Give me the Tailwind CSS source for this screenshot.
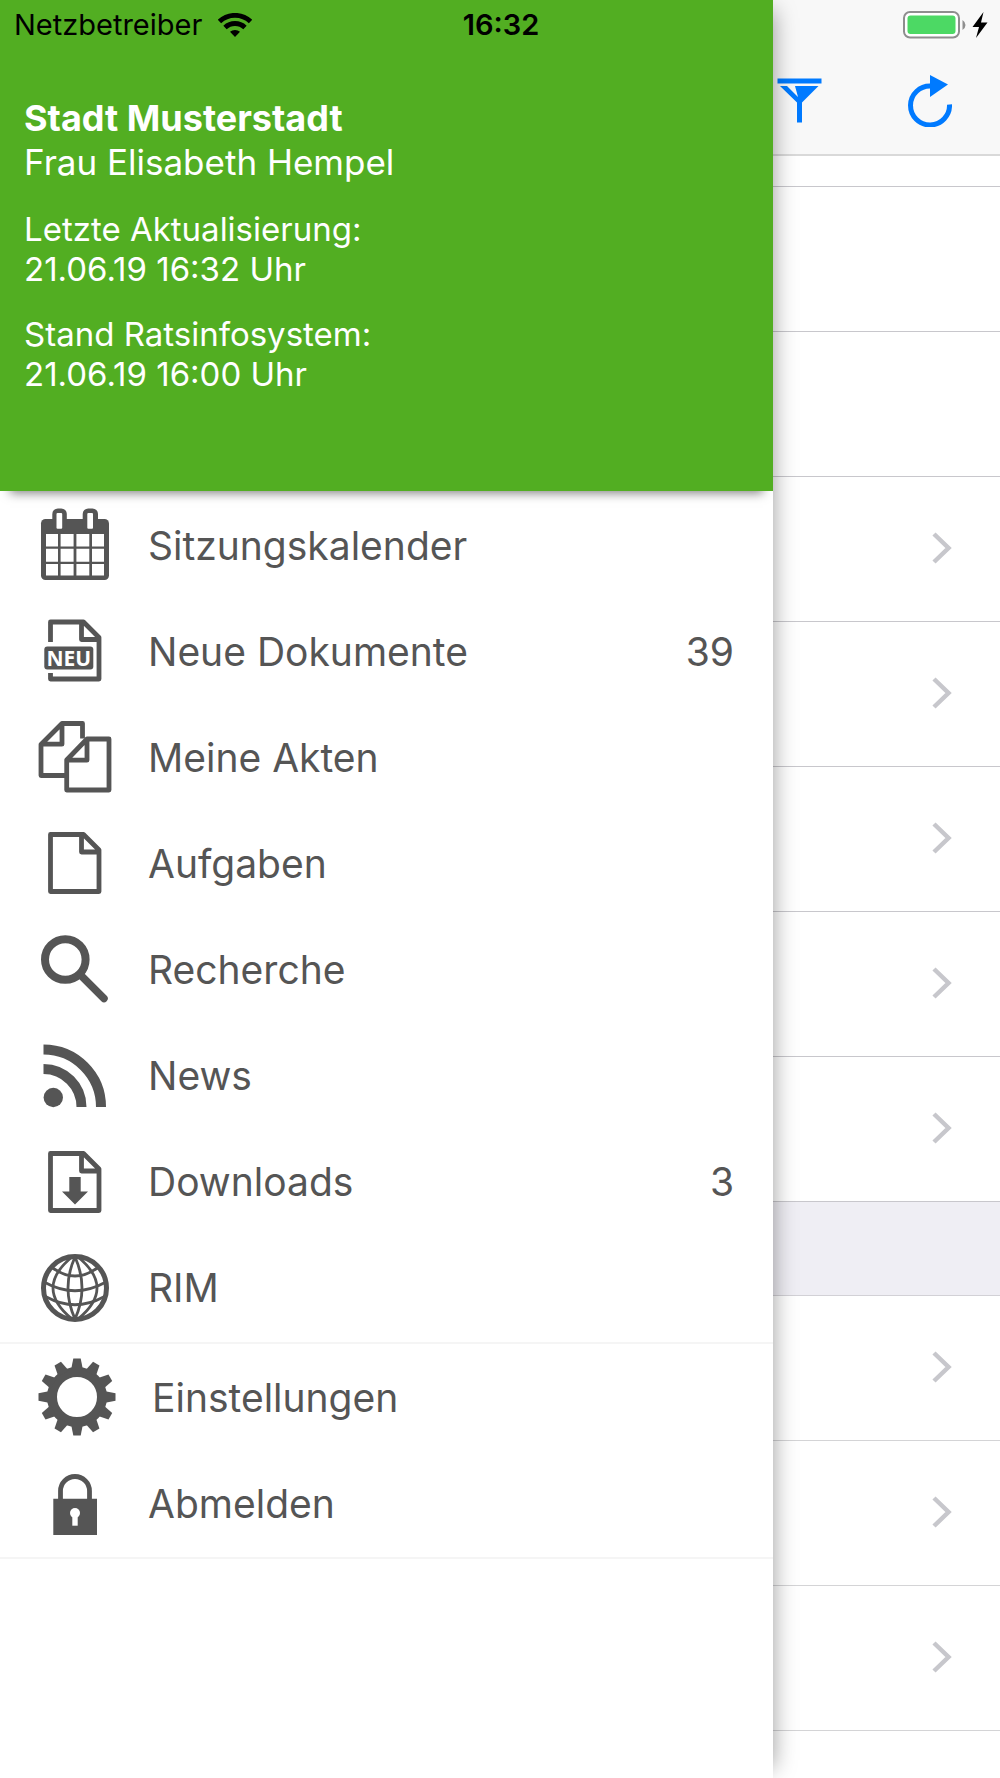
<!DOCTYPE html>
<html lang="de">
<head>
  <meta charset="utf-8">
  <meta name="viewport" content="width=device-width, initial-scale=1">
  <title>Stadt Musterstadt</title>
  <script src="https://cdn.jsdelivr.net/npm/@tailwindcss/browser@4"></script>
</head>
<body class="bg-white font-['Inter',sans-serif]">
<div class="relative flex min-h-screen overflow-hidden">

  <!-- Status bar, lies over drawer and page -->
  <div class="absolute inset-x-0 top-0 z-20 grid h-[50px] grid-cols-3 items-center pl-[14px] pr-3 text-[29px] text-black">
    <div class="flex items-center gap-4">
      <span>Netzbetreiber</span>
      <svg class="h-6 w-[34px]" viewBox="0 0 34 24" fill="none" stroke="#000" aria-label="WLAN">
        <path d="M1.500 8.500a22.500 22.500 0 0 1 31 0" stroke-width="4.800"/>
        <path d="M7 14.500a14.500 14.500 0 0 1 20 0" stroke-width="4.800"/>
        <path d="M17 24l-5-5.200a7.500 7.500 0 0 1 10 0z" fill="#000" stroke="none"/>
      </svg>
    </div>
    <span class="text-center font-semibold">16:32</span>
    <div class="flex items-center justify-end gap-1.5">
      <svg class="h-7 w-16" viewBox="0 0 64 28" aria-label="Batterie">
        <rect x="2" y="1" width="55" height="25.500" rx="6" fill="#fff" stroke="#8e8e8e" stroke-width="2"/>
        <rect x="5.500" y="4.500" width="48" height="18.500" rx="3" fill="#4cd964"/>
        <path d="M60.500 9q3 2 3 5t-3 5z" fill="#8e8e8e"/>
      </svg>
      <svg class="h-[26px] w-4" viewBox="0 0 16 26" aria-label="Lädt">
        <path d="M11.500 0L.5 15h6.500L4 26 15.500 10.500H9z" fill="#000"/>
      </svg>
    </div>
  </div>

  <!-- Drawer -->
  <aside class="relative z-10 w-[77.3%] shrink-0 bg-white shadow-[10px_0_22px_-10px_rgba(0,0,0,0.4)]">
    <header class="relative h-[491px] bg-[#52ae22] pl-6 pt-24 text-white shadow-[0_12px_10px_-10px_rgba(0,0,0,0.5)]">
      <h1 class="text-[36px] leading-[44px] font-bold">Stadt Musterstadt</h1>
      <p class="text-[35px] leading-[44px]">Frau Elisabeth Hempel</p>
      <p class="mt-[25px] text-[33px] leading-[40px]">Letzte Aktualisierung:<br>21.06.19 16:32 Uhr</p>
      <p class="mt-[25px] text-[33px] leading-[40px]">Stand Ratsinfosystem:<br>21.06.19 16:00 Uhr</p>
    </header>

    <nav class="text-[39px] text-[#555]">
      <div class="border-b-2 border-[#f5f5f5] pt-px pb-0.5">
        <a href="#" class="flex h-[106px] items-center gap-[34px] pl-9 pr-[39px]">
          <svg class="size-[78px] shrink-0" viewBox="0 0 78 78" fill="#555">
            <rect x="5" y="13" width="68" height="61" rx="4.500"/>
            <rect x="16.300" y="2.500" width="14.500" height="24" rx="5.500"/>
            <rect x="46.700" y="2.500" width="15.300" height="24" rx="5.500"/>
            <g fill="#fff">
              <rect x="20.500" y="7" width="5.700" height="15.700" rx="1"/>
              <rect x="51.300" y="7" width="5.700" height="15.700" rx="1"/>
              <path d="M10 28h12v12.400H10zM24.600 28h13v12.400h-13zM40.400 28h12.900v12.400H40.400zM56 28h12v12.400H56z"/>
              <path d="M10 42.700h12v13H10zM24.600 42.700h13v13h-13zM40.400 42.700h12.900v13H40.400zM56 42.700h12v13H56z"/>
              <path d="M10 58h12v11.400H10zM24.600 58h13v11.400h-13zM40.400 58h12.900v11.400H40.400zM56 58h12v11.400H56z"/>
            </g>
          </svg>
          <span class="pt-0.5">Sitzungskalender</span>
        </a>
        <a href="#" class="flex h-[106px] items-center gap-[34px] pl-9 pr-[39px]">
          <svg class="size-[78px] shrink-0" viewBox="0 0 78 78" fill="none" stroke="#555" stroke-width="4.800" stroke-linejoin="round">
            <path d="M14.500 30V10h33L63 25.500V67H14.500v-6M45.500 10v17.500H63"/>
            <rect x="8.300" y="34.500" width="49" height="23" rx="3" fill="#555" stroke="none"/>
            <text x="32.800" y="53.500" text-anchor="middle" fill="#fff" stroke="none" class="font-['Open_Sans',sans-serif] text-[21px] font-bold">NEU</text>
          </svg>
          <span class="pt-0.5">Neue Dokumente</span>
          <span class="ml-auto pt-0.5">39</span>
        </a>
        <a href="#" class="flex h-[106px] items-center gap-[34px] pl-9 pr-[39px]">
          <svg class="size-[78px] shrink-0" viewBox="0 0 78 78" fill="none" stroke="#555" stroke-width="4.800" stroke-linejoin="round">
            <path d="M29 57.500H5v-31L26 5.500h20.500v15M26 5.500v20.700H5"/>
            <path d="M51 21h22v51H30.700V42zM51 21v21.200H30.700"/>
          </svg>
          <span class="pt-0.5">Meine Akten</span>
        </a>
        <a href="#" class="flex h-[106px] items-center gap-[34px] pl-9 pr-[39px]">
          <svg class="size-[78px] shrink-0" viewBox="0 0 78 78" fill="none" stroke="#555" stroke-width="4.800" stroke-linejoin="round">
            <path d="M14.500 10.500h33L63 26v41.500H14.500zM45.500 10.500V28H63"/>
          </svg>
          <span class="pt-0.5">Aufgaben</span>
        </a>
        <a href="#" class="flex h-[106px] items-center gap-[34px] pl-9 pr-[39px]">
          <svg class="size-[78px] shrink-0" viewBox="0 0 78 78" fill="none" stroke="#555" stroke-linecap="round">
            <circle cx="29.300" cy="29.500" r="20.300" stroke-width="8"/>
            <path d="M45 45.500l23 23" stroke-width="7.500"/>
          </svg>
          <span class="pt-0.5">Recherche</span>
        </a>
        <a href="#" class="flex h-[106px] items-center gap-[34px] pl-9 pr-[39px]">
          <svg class="size-[78px] shrink-0" viewBox="0 0 78 78" fill="none" stroke="#555" stroke-width="10">
            <circle cx="17.300" cy="61.500" r="9.700" fill="#555" stroke="none"/>
            <path d="M7.500 13.500A57.500 57.500 0 0 1 65 71M7.500 33a38 38 0 0 1 38 38"/>
          </svg>
          <span class="pt-0.5">News</span>
        </a>
        <a href="#" class="flex h-[106px] items-center gap-[34px] pl-9 pr-[39px]">
          <svg class="size-[78px] shrink-0" viewBox="0 0 78 78" fill="none" stroke="#555" stroke-width="4.800" stroke-linejoin="round">
            <path d="M14.500 11.500h33L63 27v41.500H14.500zM45.500 11.500V29H63"/>
            <path d="M33.300 35h11.400v14.500H52L39 62.500l-13-13h7.300z" fill="#555" stroke="none"/>
          </svg>
          <span class="pt-0.5">Downloads</span>
          <span class="ml-auto pt-0.5">3</span>
        </a>
        <a href="#" class="flex h-[106px] items-center gap-[34px] pl-9 pr-[39px]">
          <svg class="size-[78px] shrink-0" viewBox="0 0 78 78" fill="none" stroke="#555" stroke-width="2.800">
            <circle cx="39" cy="40" r="31.500" stroke-width="5"/>
            <path d="M39 9Q25 40 39 71M39 9q14 31 0 62M36 9Q-2 40 36 71M42 9q38 31 0 62"/>
            <path d="M16 19.500q23 17 46 0M9 34.500q30 16.500 60 0M10.500 49q28.500 15.500 57 0"/>
          </svg>
          <span class="pt-0.5">RIM</span>
        </a>
      </div>

      <div class="border-b-2 border-[#f5f5f5] pb-px">
        <a href="#" class="flex h-[106px] items-center gap-[34px] pl-9 pr-[39px]">
          <svg class="size-[82px] shrink-0" viewBox="0 0 82 82" fill="#555">
            <defs><path id="tooth" d="M37.300 2.500h7.400L47 14H35z"/></defs>
            <circle cx="41" cy="41" r="25" fill="none" stroke="#555" stroke-width="10"/>
            <use href="#tooth"/>
            <use href="#tooth" transform="rotate(30 41 41)"/>
            <use href="#tooth" transform="rotate(60 41 41)"/>
            <use href="#tooth" transform="rotate(90 41 41)"/>
            <use href="#tooth" transform="rotate(120 41 41)"/>
            <use href="#tooth" transform="rotate(150 41 41)"/>
            <use href="#tooth" transform="rotate(180 41 41)"/>
            <use href="#tooth" transform="rotate(210 41 41)"/>
            <use href="#tooth" transform="rotate(240 41 41)"/>
            <use href="#tooth" transform="rotate(270 41 41)"/>
            <use href="#tooth" transform="rotate(300 41 41)"/>
            <use href="#tooth" transform="rotate(330 41 41)"/>
          </svg>
          <span class="pt-0.5">Einstellungen</span>
        </a>
        <a href="#" class="flex h-[106px] items-center gap-[34px] pl-9 pr-[39px]">
          <svg class="size-[78px] shrink-0" viewBox="0 0 78 78" fill="#555">
            <path d="M24.500 36v-9a14.500 14.500 0 0 1 29 0v9" fill="none" stroke="#555" stroke-width="4.800"/>
            <path d="M17.300 34.700H61V71H17.300z"/>
            <circle cx="39" cy="49" r="5" fill="#fff"/>
            <path d="M36.300 50h5.400v11.700h-5.400z" fill="#fff"/>
          </svg>
          <span class="pt-0.5">Abmelden</span>
        </a>
      </div>
    </nav>
  </aside>

  <!-- Page behind the drawer -->
  <main class="min-w-0 flex-1">
    <div class="flex h-[156px] items-end justify-between border-b-2 border-[#d9d9d9] bg-[#f8f8f8] pb-[27px] pl-1 pr-12">
      <button type="button" aria-label="Filter">
        <svg class="h-[52px] w-[46px]" viewBox="0 0 46 52" fill="#007aff">
          <path d="M.5 3.500h44v5H.5zM3 11h7l11 11-3-11H41.500L25 27.500v20h-5v-20z"/>
        </svg>
      </button>
      <button type="button" aria-label="Aktualisieren">
        <svg class="h-[52px] w-11" viewBox="0 0 44 52" fill="none">
          <path d="M41.500 29.500A19.500 19.500 0 1 1 23 11" stroke="#007aff" stroke-width="5"/>
          <path d="M22 0l18 9.500L22 22z" fill="#007aff"/>
        </svg>
      </button>
    </div>
    <div class="h-[31px] border-b border-[#c8c7cc]"></div>
    <ul class="text-[#c7c7cc]">
      <li class="h-[145px] border-b border-[#c8c7cc]"></li>
      <li class="h-[145px] border-b border-[#c8c7cc]"></li>
      <li class="border-b border-[#c8c7cc]"><a href="#" aria-label="Öffnen" class="flex h-36 items-center justify-end pr-12 pb-0.5"><svg class="h-8 w-5" viewBox="0 0 20 32" fill="none" stroke="currentColor" stroke-width="4.500"><path d="M2 2l14.500 14L2 30"/></svg></a></li>
      <li class="border-b border-[#c8c7cc]"><a href="#" aria-label="Öffnen" class="flex h-36 items-center justify-end pr-12 pb-0.5"><svg class="h-8 w-5" viewBox="0 0 20 32" fill="none" stroke="currentColor" stroke-width="4.500"><path d="M2 2l14.500 14L2 30"/></svg></a></li>
      <li class="border-b border-[#c8c7cc]"><a href="#" aria-label="Öffnen" class="flex h-36 items-center justify-end pr-12 pb-0.5"><svg class="h-8 w-5" viewBox="0 0 20 32" fill="none" stroke="currentColor" stroke-width="4.500"><path d="M2 2l14.500 14L2 30"/></svg></a></li>
      <li class="border-b border-[#c8c7cc]"><a href="#" aria-label="Öffnen" class="flex h-36 items-center justify-end pr-12 pb-0.5"><svg class="h-8 w-5" viewBox="0 0 20 32" fill="none" stroke="currentColor" stroke-width="4.500"><path d="M2 2l14.500 14L2 30"/></svg></a></li>
      <li class="border-b border-[#c8c7cc]"><a href="#" aria-label="Öffnen" class="flex h-36 items-center justify-end pr-12 pb-0.5"><svg class="h-8 w-5" viewBox="0 0 20 32" fill="none" stroke="currentColor" stroke-width="4.500"><path d="M2 2l14.500 14L2 30"/></svg></a></li>
      <li class="h-[94px] border-b border-[#d2d1d6] bg-[#efeef4]"></li>
      <li class="border-b border-[#d4d4d6]"><a href="#" aria-label="Öffnen" class="flex h-36 items-center justify-end pr-12 pb-0.5"><svg class="h-8 w-5" viewBox="0 0 20 32" fill="none" stroke="currentColor" stroke-width="4.500"><path d="M2 2l14.500 14L2 30"/></svg></a></li>
      <li class="border-b border-[#d4d4d6]"><a href="#" aria-label="Öffnen" class="flex h-36 items-center justify-end pr-12 pb-0.5"><svg class="h-8 w-5" viewBox="0 0 20 32" fill="none" stroke="currentColor" stroke-width="4.500"><path d="M2 2l14.500 14L2 30"/></svg></a></li>
      <li class="border-b border-[#d4d4d6]"><a href="#" aria-label="Öffnen" class="flex h-36 items-center justify-end pr-12 pb-0.5"><svg class="h-8 w-5" viewBox="0 0 20 32" fill="none" stroke="currentColor" stroke-width="4.500"><path d="M2 2l14.500 14L2 30"/></svg></a></li>
    </ul>
  </main>
</div>
</body>
</html>
